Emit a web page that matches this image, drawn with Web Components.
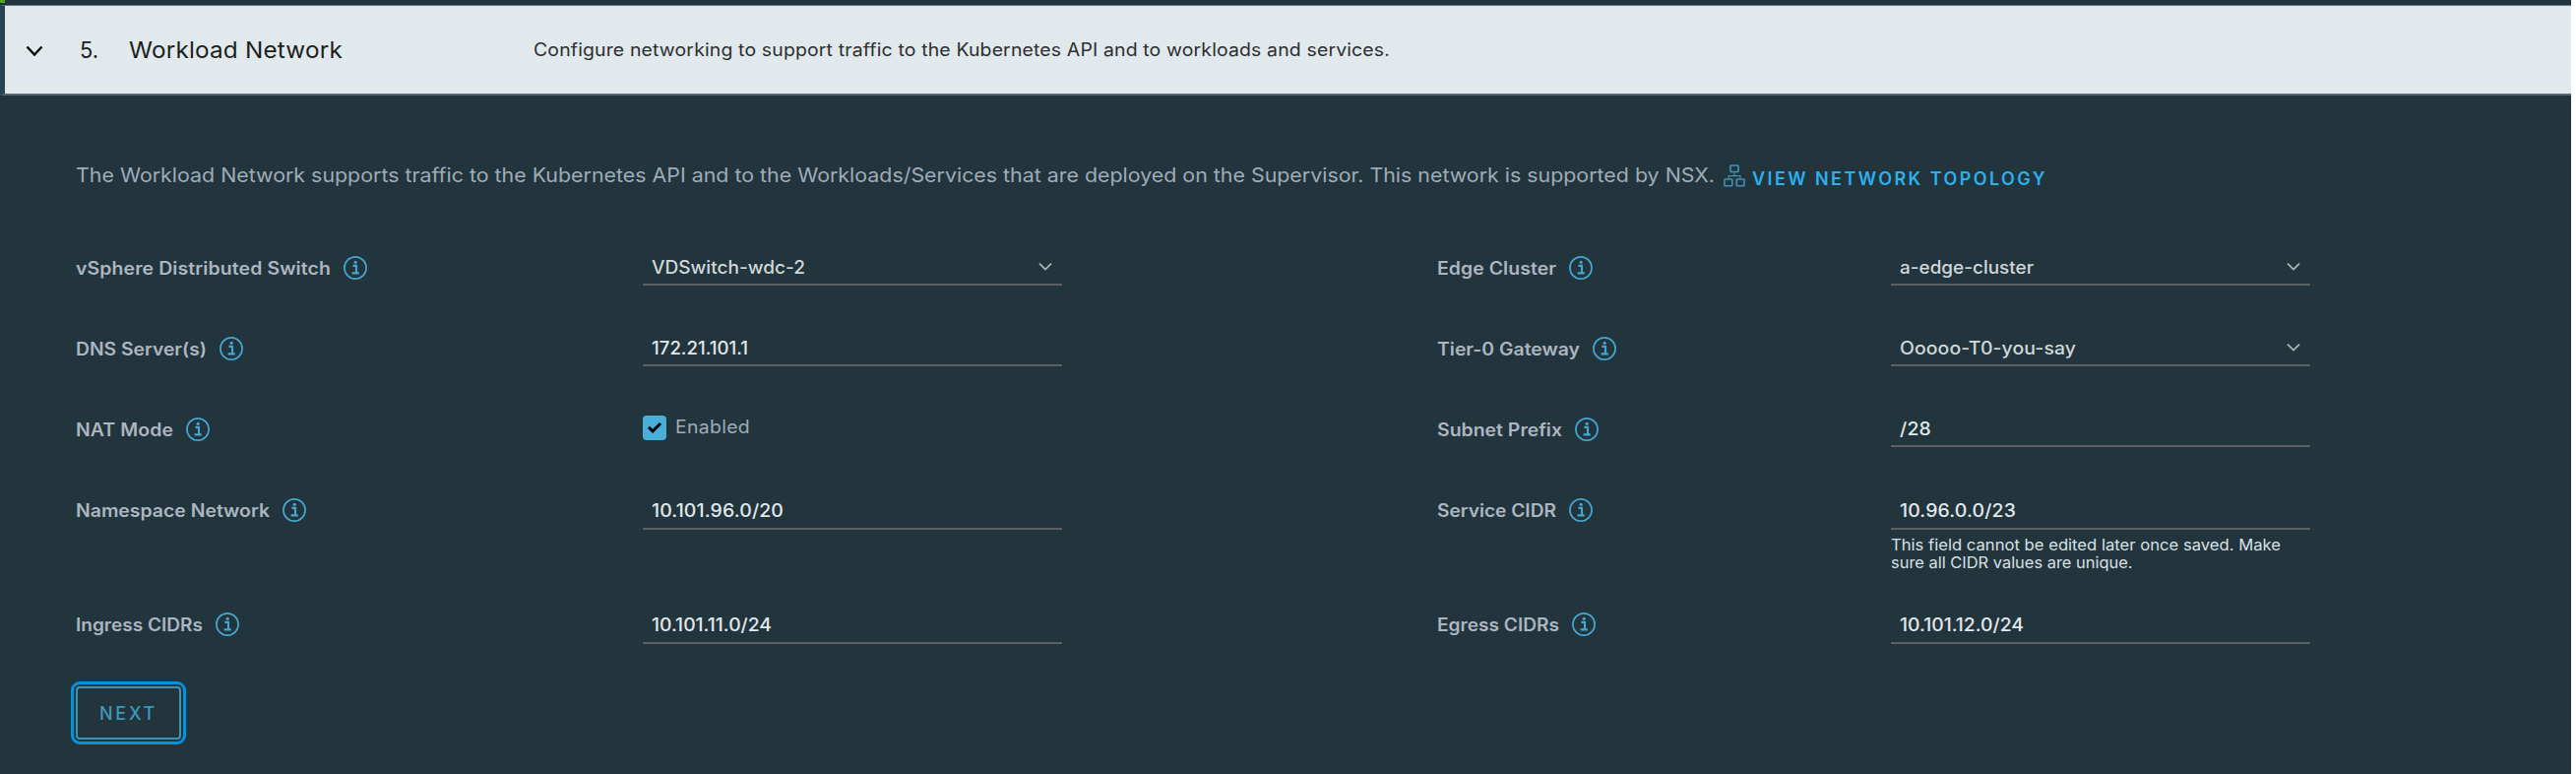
<!DOCTYPE html>
<html lang="en"><head><meta charset="utf-8"><title>Workload Network</title>
<style>
html,body{margin:0;height:100%}
body{background:#22343c;font-family:Inter,"Open Sans",sans-serif;overflow:hidden}
</style></head><body>
<wn-page></wn-page>
<script>
const define=(name,html,setup)=>customElements.define(name,class extends HTMLElement{
  connectedCallback(){
    if(this.shadowRoot)return;
    this.attachShadow({mode:'open'}).innerHTML=html;
    if(setup)setup(this,this.shadowRoot);
  }
});

// One line of text that fills the given width: glyphs widen up to 8%
// (unless "tracked"), and letter spacing takes up the rest.
define('wn-text',`<style>:host{display:block;white-space:nowrap;flex:none}span{display:inline-block;transform-origin:0 50%}</style><span><slot></slot></span>`,(el,root)=>{
  const w=+el.getAttribute('w'),n=el.textContent.length,s=root.querySelector('span');
  const nat=s.getBoundingClientRect().width;
  const k=el.hasAttribute('tracked')?1:Math.max(.96,Math.min(1.08,w/nat));
  s.style.letterSpacing=((w/k-nat)/n).toFixed(3)+'px';
  if(k!==1)s.style.transform=`scaleX(${k.toFixed(4)})`;
  el.style.width=w+'px';
});

define('wn-info',`<style>:host{display:block;width:24px;height:24px;flex:none}svg{display:block}</style>
<svg width="24" height="24" viewBox="0 0 24 24"><circle cx="12" cy="12" r="11.1" fill="none" stroke="#45a6cf" stroke-width="1.7"/><circle cx="12.2" cy="6.3" r="1.6" fill="#45a6cf"/><path d="M9.4 9.9h3.6v7.2M8.6 17.4h7.2" fill="none" stroke="#45a6cf" stroke-width="2.1"/></svg>`);

define('wn-caret',`<style>:host{display:block;flex:none}svg{display:block}</style><svg width="14" height="10" viewBox="0 0 14 10"><path d="M1 1.6L7 7.6L13 1.6" fill="none" stroke="#adb5b8" stroke-width="1.8"/></svg>`);

define('wn-header',`<style>
:host{display:flex;box-sizing:border-box;height:92px;width:2612px;margin-top:5px;align-items:center;background:#e1e9ec;border-top:1px solid #66778a;border-bottom:2px solid #566675;color:#1b1d20;font-size:22.5px;border-left:5px solid #2c4353}
svg{margin:3px 0 0 21px;width:18px;flex:none}
.n{margin-left:37px}.t{margin-left:31px}.d{margin-left:194px;font-size:18px;color:#2c2e31}
</style><svg width="18" height="14" viewBox="0 0 18 14"><path d="M1.5 2.5L9 10.5L16.5 2.5" fill="none" stroke="#000" stroke-width="2.3"/></svg>
<wn-text class="n" w="19">5.</wn-text><wn-text class="t" w="217">Workload Network</wn-text>
<wn-text class="d" w="870">Configure networking to support traffic to the Kubernetes API and to workloads and services.</wn-text>`);

define('wn-intro',`<style>
:host{display:flex;align-items:center;height:24px;margin:69px 0 0 77px;font-size:20px;color:#9eacb8}
svg{margin:1px 0 0 9px;flex:none}.l{margin:7px 0 0 7px;font-size:18px;font-weight:600;color:#2bb0f0}
</style><wn-text w="1665">The Workload Network supports traffic to the Kubernetes API and to the Workloads/Services that are deployed on the Supervisor. This network is supported by NSX.</wn-text>
<svg width="22" height="23" viewBox="0 0 22 23" fill="none" stroke="#4092b5" stroke-width="1.6"><rect x="7" y="1" width="8" height="6.5" rx=".6"/><rect x="1" y="15" width="7.8" height="6.8" rx=".6"/><rect x="13.2" y="15" width="7.8" height="6.8" rx=".6"/><path d="M11 7.5v3.8M5 15v-3.4h12V15" stroke-width="1.1"/></svg>
<wn-text class="l" tracked w="300">VIEW NETWORK TOPOLOGY</wn-text>`);

// Form row cell: label with info icon, then a select, an input or a checkbox.
define('wn-field',`<style>
:host{display:grid;align-items:start}
.lab{display:flex;align-items:center;gap:13px;height:24px;padding-top:20px;font-size:18px;font-weight:600;color:#abb6c0}
.lab.tall{padding-top:19px}
.box{box-sizing:border-box;width:426px;height:50px;border-bottom:2px solid #5d6163;display:flex;align-items:center;justify-content:space-between;padding:14px 10px 0 9px;font-size:18px;font-weight:500;color:#e0e9eb}
.box.sel{color:#cfd8db}
.box.tall{height:51px;padding-bottom:1px}
.chk{display:flex;align-items:center;gap:9px;height:24px;padding-top:18px;font-size:18px;color:#9eacb8}
.chk svg{flex:none}
.chk wn-text{margin-top:-1px}
wn-caret{margin-top:0}
</style><div class="lab"></div><div class="val"></div>`,(el,root)=>{
  const a=k=>el.getAttribute(k);
  const l=root.querySelector('.lab');
  if(a('kind')==='tall')l.classList.add('tall');
  l.innerHTML=`<wn-text w="${a('lw')}">${a('label')}</wn-text><wn-info></wn-info>`;
  const v=root.querySelector('.val'),t=`<wn-text w="${a('vw')}">${a('value')}</wn-text>`;
  el.style.gridTemplateColumns=a('cols');
  if(a('kind')==='check')
    v.innerHTML=`<div class="chk"><svg width="24" height="25" viewBox="0 0 24 25"><rect width="24" height="25" rx="4" fill="#49afd9"/><path d="M6 11.8L10.2 15.8L18 8" fill="none" stroke="#000" stroke-width="3"/></svg>${t}</div>`;
  else
    v.innerHTML=`<div class="box ${a('kind')||''}">${t}${a('kind')==='sel'?'<wn-caret></wn-caret>':''}</div><slot></slot>`;
});

define('wn-help',`<style>:host{display:block;padding-top:6px;font-size:16px;line-height:18px;color:#d8e1e4}</style><wn-text w="396">This field cannot be edited later once saved. Make</wn-text><wn-text w="245.5">sure all CIDR values are unique.</wn-text>`);

define('wn-form',`<style>
:host{display:grid;grid-template-columns:1383px 1fr;grid-template-rows:82px 82px 83px 116px 62px;margin:50px 0 0 77px}
</style>
<wn-field cols="576px 426px" kind="sel" label="vSphere Distributed Switch" lw="259" value="VDSwitch-wdc-2" vw="156"></wn-field>
<wn-field cols="461px 426px" kind="sel" label="Edge Cluster" lw="121" value="a-edge-cluster" vw="136"></wn-field>
<wn-field cols="576px 426px" label="DNS Server(s)" lw="133" value="172.21.101.1" vw="98"></wn-field>
<wn-field cols="461px 426px" kind="sel" label="Tier-0 Gateway" lw="145" value="Ooooo-T0-you-say" vw="179"></wn-field>
<wn-field cols="576px 426px" kind="check" label="NAT Mode" lw="99" value="Enabled" vw="76"></wn-field>
<wn-field cols="461px 426px" label="Subnet Prefix" lw="127" value="/28" vw="32"></wn-field>
<wn-field cols="576px 426px" kind="tall" label="Namespace Network" lw="197" value="10.101.96.0/20" vw="134"></wn-field>
<wn-field cols="461px 426px" kind="tall" label="Service CIDR" lw="121" value="10.96.0.0/23" vw="118"><wn-help></wn-help></wn-field>
<wn-field cols="576px 426px" kind="tall" label="Ingress CIDRs" lw="129" value="10.101.11.0/24" vw="122"></wn-field>
<wn-field cols="461px 426px" kind="tall" label="Egress CIDRs" lw="124" value="10.101.12.0/24" vw="126"></wn-field>`);

define('wn-button',`<style>
:host{display:flex;box-sizing:border-box;width:117px;height:64px;margin:27px 0 0 72px;border:3px solid #0095e0;border-radius:9px;padding:2px}
button{all:unset;flex:1;box-sizing:border-box;border:2px solid #4290b2;border-radius:4px;display:flex;align-items:center;justify-content:center;font:500 18px Inter,sans-serif;color:#3f97bd}
</style><button><wn-text tracked w="59">NEXT</wn-text></button>`);

define('wn-page',`<style>
:host{display:flow-root;box-sizing:border-box;height:786px;width:2617px;background:linear-gradient(90deg,#22343c 2612px,#fff 2612px);position:relative}
i{position:absolute;left:0;top:0;width:5px;height:3px;background:#5aa220}
</style><i></i><wn-header></wn-header><wn-intro></wn-intro><wn-form></wn-form><wn-button></wn-button>`);
</script></body></html>
